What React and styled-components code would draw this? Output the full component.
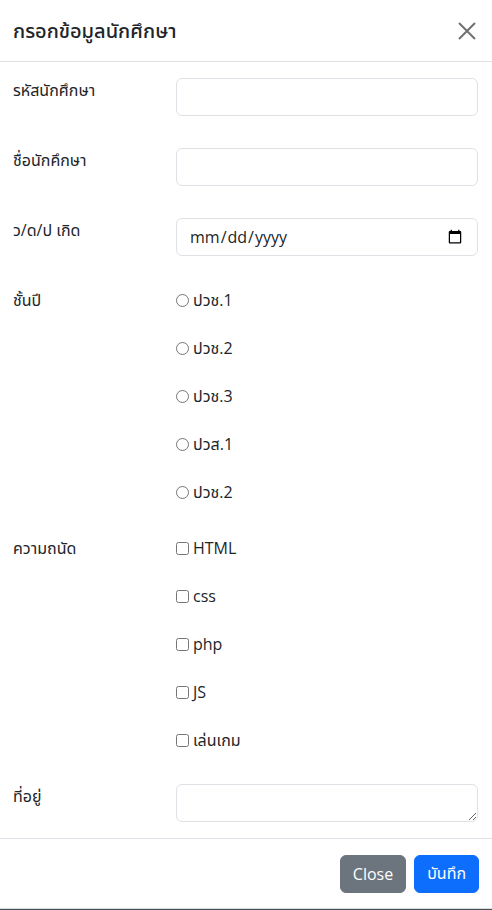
import React from "react";
import styled, { createGlobalStyle } from "styled-components";

const GlobalStyle = createGlobalStyle`
    html, body {
        margin: 0;
        padding: 0;
        background: #4d5257;
    }
    body {
        font-family: "Open Sans", "Noto Sans Thai", "Noto Sans", sans-serif;
        font-size: 16px;
        color: #212529;
    }
`;

const Modal = styled.div`
    width: 492px;
    background: #fff;
    border-bottom: 1px solid #d9dadb;
    box-sizing: border-box;
`;

const Header = styled.div`
    height: 61px;
    display: flex;
    align-items: center;
    justify-content: space-between;
    padding: 0 12px 0 13px;
    border-bottom: 1px solid #dee2e6;
`;

const Title = styled.h5`
    margin: 0;
    font-size: 20px;
    font-weight: 500;
    line-height: 1.5;
`;

const CloseX = styled.button`
    width: 26px;
    height: 26px;
    padding: 0;
    border: 0;
    background: transparent;
    display: flex;
    align-items: center;
    justify-content: center;
    cursor: pointer;
`;

const Body = styled.form`
    padding: 16px 14px 16px 13px;
`;

const Row = styled.div`
    display: grid;
    grid-template-columns: 163px 1fr;
    margin-bottom: 32px;
    &:last-child {
        margin-bottom: 0;
    }
`;

const Label = styled.label`
    line-height: 24px;
`;

const Input = styled.input`
    box-sizing: border-box;
    width: 100%;
    height: 38px;
    padding: 6px 12px;
    font: inherit;
    color: #212529;
    border: 1px solid #dee2e6;
    border-radius: 6px;
    outline: none;
`;

const TextArea = styled.textarea`
    box-sizing: border-box;
    width: 100%;
    height: 38px;
    padding: 6px 12px;
    font: inherit;
    border: 1px solid #dee2e6;
    border-radius: 6px;
    resize: vertical;
    display: block;
`;

const Options = styled.div`
    display: flex;
    flex-direction: column;
    gap: 24px;
`;

const Option = styled.label`
    display: flex;
    align-items: flex-start;
    line-height: 24px;
    input {
        width: 13px;
        height: 13px;
        margin: 6px 4px 0 0;
    }
`;

const Footer = styled.div`
    border-top: 1px solid #dee2e6;
    display: flex;
    justify-content: flex-end;
    gap: 8px;
    padding: 16px 13px 15px;
`;

const Button = styled.button`
    height: 38px;
    padding: 0 12px;
    font: inherit;
    color: #fff;
    background: ${({ variant }) => (variant === "primary" ? "#0d6efd" : "#6c757d")};
    border: 1px solid ${({ variant }) => (variant === "primary" ? "#0d6efd" : "#6c757d")};
    border-radius: 6px;
`;

const years = ["ปวช.1", "ปวช.2", "ปวช.3", "ปวส.1", "ปวช.2"];
const skills = ["HTML", "css", "php", "JS", "เล่นเกม"];

export default function App() {
    return (
        <>
            <GlobalStyle />
            <Modal>
                <Header>
                    <Title>กรอกข้อมูลนักศึกษา</Title>
                    <CloseX type="button" aria-label="Close">
                        <svg width="18" height="18" viewBox="0 0 18 18">
                            <path d="M1 1L17 17M17 1L1 17" stroke="#707070" strokeWidth="2" />
                        </svg>
                    </CloseX>
                </Header>
                <Body>
                    <Row>
                        <Label>รหัสนักศึกษา</Label>
                        <Input type="text" />
                    </Row>
                    <Row>
                        <Label>ชื่อนักคึกษา</Label>
                        <Input type="text" />
                    </Row>
                    <Row>
                        <Label>ว/ด/ป เกิด</Label>
                        <Input type="date" />
                    </Row>
                    <Row>
                        <Label>ชั้นปี</Label>
                        <Options>
                            {years.map((y, i) => (
                                <Option key={i}>
                                    <input type="radio" name="year" />
                                    {y}
                                </Option>
                            ))}
                        </Options>
                    </Row>
                    <Row>
                        <Label>ความถนัด</Label>
                        <Options>
                            {skills.map((s) => (
                                <Option key={s}>
                                    <input type="checkbox" />
                                    {s}
                                </Option>
                            ))}
                        </Options>
                    </Row>
                    <Row>
                        <Label>ที่อยู่</Label>
                        <TextArea rows={1} />
                    </Row>
                </Body>
                <Footer>
                    <Button type="button">Close</Button>
                    <Button type="button" variant="primary">บันทึก</Button>
                </Footer>
            </Modal>
        </>
    );
}
